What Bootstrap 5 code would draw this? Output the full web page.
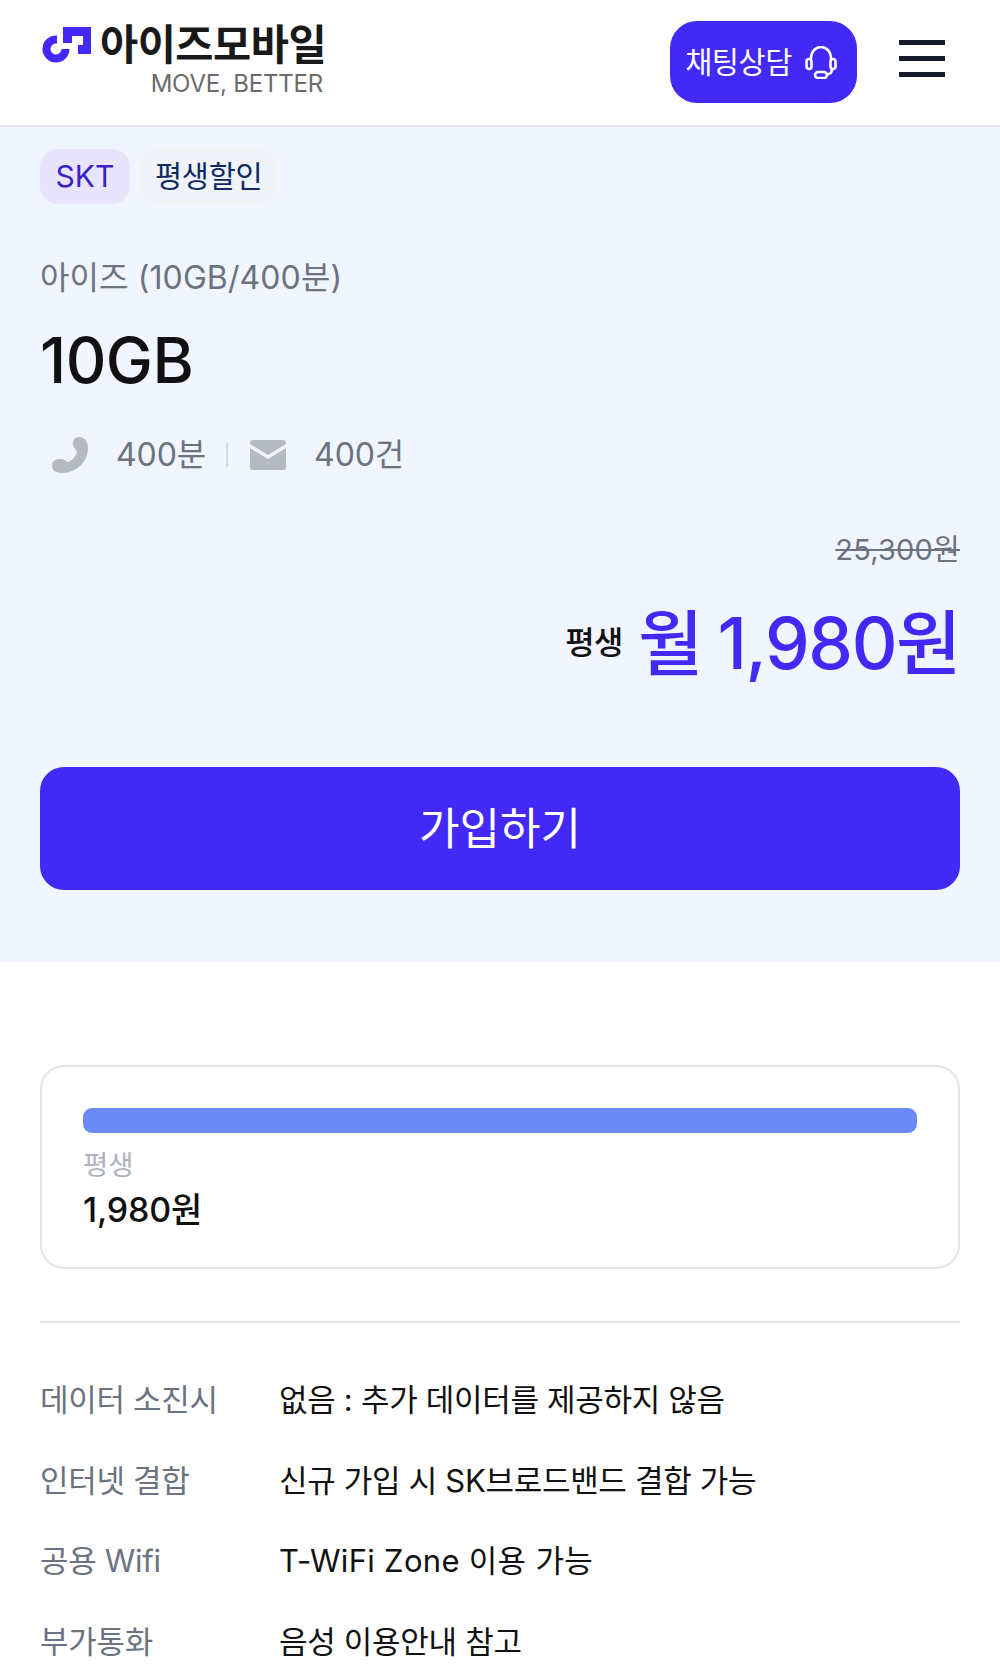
<!DOCTYPE html>
<html lang="ko">
<head>
  <meta charset="UTF-8" />
  <meta name="viewport" content="width=device-width, initial-scale=1" />
  <title>아이즈모바일</title>
  <link href="https://cdn.jsdelivr.net/npm/bootstrap@5.3.0/dist/css/bootstrap.min.css" rel="stylesheet">
  <style>
    body {
      font-family: Inter, "Noto Sans CJK KR", sans-serif;
      color: #111;
      height: 1679px;
      overflow: hidden;
    }

    /* header */
    .top-bar {
      height: 127px;
      padding: 21px 55px 0 42px;
      border-bottom: 2px solid #e3e5ea;
    }
    .logo-name {
      font-size: 41.500px;
      font-weight: 700;
      line-height: 44px;
      letter-spacing: -0.5px;
      color: #191919;
    }
    .logo-top {
      margin-top: 2px;
    }
    .logo-sub {
      font-size: 24px;
      line-height: 26px;
      color: #6b6b6b;
      text-align: right;
      letter-spacing: -0.2px;
      margin: 4px 3px 0 0;
    }
    .chat-btn {
      width: 187px;
      height: 82px;
      padding-right: 5px;
      border-radius: 27px;
      background: #4229f5;
      color: #fff;
      font-size: 29.500px;
      letter-spacing: -0.5px;
      gap: 13px;
    }
    .burger {
      width: 46px;
      margin: 19px 0 0 42px;
    }
    .burger span {
      display: block;
      height: 5px;
      background: #171c2c;
      margin-bottom: 11px;
    }

    /* hero */
    .hero {
      height: 835px;
      background: #f1f5ff;
      padding: 22px 40px 0;
    }
    .tag-row {
      gap: 10px;
    }
    .tag-item {
      height: 55px;
      border-radius: 18px;
      font-size: 30px;
      padding: 0 15px;
    }
    .tag-net {
      background: #e8e4fd;
      color: #3a22c4;
      width: 90px;
      justify-content: center;
    }
    .tag-sale {
      background: #f0f3f8;
      color: #0f2a63;
      font-size: 29.500px;
      letter-spacing: -0.3px;
    }
    .plan-sub {
      font-size: 32px;
      line-height: 44px;
      color: #6b7280;
      margin-top: 52px;
      letter-spacing: 0.1px;
    }
    .plan-data {
      font-size: 63px;
      line-height: 74px;
      font-weight: 500;
      margin-top: 23px;
      letter-spacing: -0.5px;
    }
    .spec-row {
      margin-top: 36px;
      height: 44px;
      font-size: 32px;
      color: #6b7280;
      letter-spacing: -0.1px;
    }
    .spec-icon {
      margin: 0 28px 0 12px;
    }
    .spec-sep {
      width: 2px;
      height: 24px;
      background: #d5d9e0;
      margin: 0 22px 0 20px;
    }
    .mail-icon {
      margin-right: 28px;
    }
    .old-price {
      margin-top: 53px;
      font-size: 29px;
      line-height: 40px;
      color: #6b7280;
      letter-spacing: 0.2px;
      text-decoration: line-through;
      text-align: right;
    }
    .price-row {
      margin-top: 30px;
      height: 86px;
    }
    .price-pre {
      font-size: 32px;
      font-weight: 500;
      margin-right: 15px;
      letter-spacing: -0.5px;
    }
    .price-now {
      font-size: 71px;
      line-height: 86px;
      font-weight: 500;
      color: #4229f5;
      word-spacing: -2px;
      letter-spacing: -1.400px;
    }
    .join-btn {
      width: 100%;
      height: 123px;
      margin-top: 81px;
      border: 0;
      border-radius: 24px;
      background: #4229f5;
      color: #fff;
      font-size: 44px;
      font-weight: 400;
    }

    /* lower part */
    .detail-wrap {
      padding: 103px 40px 0;
    }
    .pay-box {
      height: 204px;
      border: 2px solid #e5e5e7;
      border-radius: 24px;
      padding: 41px 41px 0;
    }
    .pay-bar {
      height: 25px;
      border-radius: 9px;
      background: #6b8bf8;
    }
    .pay-label {
      font-size: 27.500px;
      line-height: 36px;
      color: #adb2bd;
      margin-top: 14px;
    }
    .pay-value {
      font-size: 34px;
      line-height: 46px;
      font-weight: 500;
      margin-top: 4px;
      letter-spacing: -0.2px;
    }
    .rule-line {
      height: 2px;
      background: #e5e5e7;
      margin: 52px 0 37px;
    }
    .info-row {
      height: 80.500px;
      font-size: 31px;
      letter-spacing: -0.3px;
    }
    .info-key {
      width: 239px;
      color: #6b7280;
    }
    .info-latin {
      letter-spacing: 0.3px;
    }
  </style>
</head>
<body>
  <!-- 헤더 -->
  <header class="top-bar d-flex justify-content-between align-items-start">
    <div>
      <div class="logo-top d-flex align-items-center gap-2">
        <svg width="50" height="36" viewBox="0 0 50 36">
          <path d="M15 8.500 A13.500 13.500 0 1 0 27.500 22 H19.500 A5.500 5.500 0 1 1 15 16.500 Z" fill="#4229f5"/>
          <path d="M21 0 H49 V27 H36 V18 H41 V9 H30 V16 H21 Z" fill="#4229f5"/>
        </svg>
        <div class="logo-name">아이즈모바일</div>
      </div>
      <div class="logo-sub">MOVE, BETTER</div>
    </div>
    <div class="d-flex align-items-start">
      <div class="chat-btn d-flex align-items-center justify-content-center">
        <span>채팅상담</span>
        <svg width="32" height="33" viewBox="0 0 32 33" fill="none" stroke="#fff" stroke-width="2.600">
          <path d="M6 13 C6 -3 26 -3 26 13"/>
          <rect x="1.500" y="13" width="5" height="10" rx="2.500"/>
          <rect x="25.500" y="13" width="5" height="10" rx="2.500"/>
          <path d="M27 23 C27 27 24 28.500 21 28.500"/>
          <rect x="10" y="26" width="12" height="6" rx="3"/>
        </svg>
      </div>
      <div class="burger"><span></span><span></span><span></span></div>
    </div>
  </header>

  <!-- 요금제 요약 -->
  <section class="hero">
    <div class="tag-row d-flex">
      <div class="tag-item tag-net d-flex align-items-center">SKT</div>
      <div class="tag-item tag-sale d-flex align-items-center">평생할인</div>
    </div>
    <div class="plan-sub">아이즈 (10GB/400분)</div>
    <div class="plan-data">10GB</div>
    <div class="spec-row d-flex align-items-center">
      <svg class="spec-icon" width="36" height="36" viewBox="0 0 36 36">
        <path d="M27 0 C33 0 36 5 36 11 C36 25 24 36 10 36 C3 36 0 33 0 28 C0 23 5 22 9 22 C13 22 14 25 16 25 C20 24 24 19 25 15 C25 13 21 11 21 7 C21 3 23 0 27 0 Z" fill="#b5b9c4"/>
      </svg>
      <span>400분</span>
      <span class="spec-sep"></span>
      <svg class="mail-icon" width="36" height="30" viewBox="0 0 36 30">
        <path d="M3 0 H33 C35 0 36 1 36 3 V4 L18 15 L0 4 V3 C0 1 1 0 3 0 Z M0 8 L18 19 L36 8 V27 C36 29 35 30 33 30 H3 C1 30 0 29 0 27 Z" fill="#b5b9c4"/>
      </svg>
      <span>400건</span>
    </div>
    <div class="old-price">25,300원</div>
    <div class="price-row d-flex justify-content-end align-items-center">
      <span class="price-pre">평생</span>
      <span class="price-now">월 1,980원</span>
    </div>
    <button class="join-btn" type="button">가입하기</button>
  </section>

  <!-- 상세 -->
  <section class="detail-wrap">
    <div class="pay-box">
      <div class="pay-bar"></div>
      <div class="pay-label">평생</div>
      <div class="pay-value">1,980원</div>
    </div>
    <div class="rule-line"></div>
    <div class="info-row d-flex align-items-center"><div class="info-key">데이터 소진시</div><div>없음 : 추가 데이터를 제공하지 않음</div></div>
    <div class="info-row d-flex align-items-center"><div class="info-key">인터넷 결합</div><div>신규 가입 시 SK브로드밴드 결합 가능</div></div>
    <div class="info-row d-flex align-items-center"><div class="info-key">공용 Wifi</div><div class="info-latin">T-WiFi Zone 이용 가능</div></div>
    <div class="info-row d-flex align-items-center"><div class="info-key">부가통화</div><div>음성 이용안내 참고</div></div>
  </section>

  <script src="https://cdn.jsdelivr.net/npm/bootstrap@5.3.0/dist/js/bootstrap.bundle.min.js"></script>
</body>
</html>
